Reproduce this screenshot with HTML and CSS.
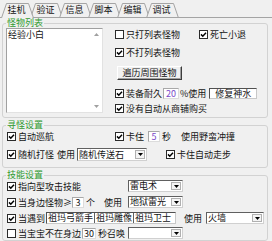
FILE: index.html
```html
<!DOCTYPE html>
<html lang="zh-CN">
<head>
<meta charset="utf-8">
<link rel="stylesheet" href="styles.css">
</head>
<body>
<div class="tabs">
  <svg class="tabshape" width="272" height="18" viewBox="0 0 272 18">
    <g fill="#f0f0f0" stroke="#a4a4a4" stroke-width="1">
      <path d="M30.5 18 L35.5 3.5 L57.5 3.5 L62.5 18"/>
      <path d="M59.5 18 L64.5 3.5 L86.5 3.5 L91.5 18"/>
      <path d="M88.5 18 L93.5 3.5 L115.5 3.5 L120.5 18"/>
      <path d="M117.5 18 L122.5 3.5 L144.5 3.5 L149.5 18"/>
      <path d="M146.5 18 L151.5 3.5 L173.5 3.5 L178.5 18"/>
    </g>
    <line x1="0" y1="17.5" x2="272" y2="17.5" stroke="#a4a4a4"/>
    <path d="M1 18.5 L6 3 L28 3 L33 18.5 Z" fill="#f0f0f0"/>
    <path d="M1.5 18 L6.5 3.5 L28.5 3.5 L33.5 18" fill="none" stroke="#a4a4a4"/>
  </svg>
  <div class="tablabels">
    <span class="tab">挂机</span><span class="tab">验证</span><span class="tab">信息</span><span class="tab">脚本</span><span class="tab">编辑</span><span class="tab">调试</span>
  </div>
</div>

<div class="panel">
  <fieldset class="grp g1">
    <legend>怪物列表</legend>
    <div class="g1body">
      <div class="listbox">
        <div class="items"><div class="item">经验小白</div></div>
        <div class="scroll">
          <svg width="5" height="3" viewBox="0 0 5 3"><path d="M0 3 L2.5 0 L5 3Z" fill="#a0a0a0"/></svg>
          <svg width="5" height="3" viewBox="0 0 5 3"><path d="M0 0 L2.5 3 L5 0Z" fill="#a0a0a0"/></svg>
        </div>
      </div>
      <div class="rcol">
        <div class="row r1">
          <label class="ck w84"><span class="cb"></span><span class="lbl">只打列表怪物</span></label>
          <label class="ck"><span class="cb on"><svg viewBox="0 0 7 7" width="7" height="7"><path d="M1 3.4 L2.8 5.2 L6 1.8" fill="none" stroke="#000" stroke-width="1.5"/></svg></span><span class="lbl">死亡小退</span></label>
        </div>
        <div class="row r2">
          <label class="ck"><span class="cb on"><svg viewBox="0 0 7 7" width="7" height="7"><path d="M1 3.4 L2.8 5.2 L6 1.8" fill="none" stroke="#000" stroke-width="1.5"/></svg></span><span class="lbl">不打列表怪物</span></label>
        </div>
        <div class="row r3"><button class="btn">遍历周围怪物</button></div>
        <div class="row r4">
          <label class="ck"><span class="cb on"><svg viewBox="0 0 7 7" width="7" height="7"><path d="M1 3.4 L2.8 5.2 L6 1.8" fill="none" stroke="#000" stroke-width="1.5"/></svg></span><span class="lbl">装备耐久</span></label>
          <span class="inp num purple w16">20</span>
          <span class="txt pct">%使用</span>
          <span class="inp sunk w48 center">修复神水</span>
        </div>
        <div class="row r5">
          <label class="ck"><span class="cb on"><svg viewBox="0 0 7 7" width="7" height="7"><path d="M1 3.4 L2.8 5.2 L6 1.8" fill="none" stroke="#000" stroke-width="1.5"/></svg></span><span class="lbl">没有自动从商铺购买</span></label>
        </div>
      </div>
    </div>
  </fieldset>

  <fieldset class="grp g2">
    <legend>寻怪设置</legend>
    <div class="gbody">
      <div class="row g2r1">
        <div class="lead108">
          <label class="ck"><span class="cb on"><svg viewBox="0 0 7 7" width="7" height="7"><path d="M1 3.4 L2.8 5.2 L6 1.8" fill="none" stroke="#000" stroke-width="1.5"/></svg></span><span class="lbl">自动巡航</span></label>
        </div>
        <label class="ck"><span class="cb on"><svg viewBox="0 0 7 7" width="7" height="7"><path d="M1 3.4 L2.8 5.2 L6 1.8" fill="none" stroke="#000" stroke-width="1.5"/></svg></span><span class="lbl">卡住</span></label>
        <span class="inp num purple w12">5</span>
        <span class="txt sec">秒</span>
        <span class="txt use1">使用野蛮冲撞</span>
      </div>
      <div class="row g2r2">
        <label class="ck"><span class="cb on"><svg viewBox="0 0 7 7" width="7" height="7"><path d="M1 3.4 L2.8 5.2 L6 1.8" fill="none" stroke="#000" stroke-width="1.5"/></svg></span><span class="lbl">随机打怪</span></label>
        <span class="txt use2">使用</span>
        <div class="dd dd70"><span class="ddt">随机传送石</span><span class="ddb"><svg width="5" height="3" viewBox="0 0 5 3"><path d="M0 0 L2.5 3 L5 0Z" fill="#000"/></svg></span></div>
        <label class="ck stuck"><span class="cb on"><svg viewBox="0 0 7 7" width="7" height="7"><path d="M1 3.4 L2.8 5.2 L6 1.8" fill="none" stroke="#000" stroke-width="1.5"/></svg></span><span class="lbl">卡住自动走步</span></label>
      </div>
    </div>
  </fieldset>

  <fieldset class="grp g3">
    <legend>技能设置</legend>
    <div class="gbody">
      <div class="row sr">
        <div class="lead121">
          <label class="ck"><span class="cb on"><svg viewBox="0 0 7 7" width="7" height="7"><path d="M1 3.4 L2.8 5.2 L6 1.8" fill="none" stroke="#000" stroke-width="1.5"/></svg></span><span class="lbl">指向型攻击技能</span></label>
        </div>
        <div class="dd dd55"><span class="ddt">雷电术</span><span class="ddb"><svg width="5" height="3" viewBox="0 0 5 3"><path d="M0 0 L2.5 3 L5 0Z" fill="#000"/></svg></span></div>
      </div>
      <div class="row sr">
        <div class="lead121">
          <label class="ck"><span class="cb on"><svg viewBox="0 0 7 7" width="7" height="7"><path d="M1 3.4 L2.8 5.2 L6 1.8" fill="none" stroke="#000" stroke-width="1.5"/></svg></span><span class="lbl">当身边怪物≥</span></label>
          <span class="inp num w12">3</span>
          <span class="txt ge">个</span>
          <span class="txt use3">使用</span>
        </div>
        <div class="dd dd55"><span class="ddt">地狱雷光</span><span class="ddb"><svg width="5" height="3" viewBox="0 0 5 3"><path d="M0 0 L2.5 3 L5 0Z" fill="#000"/></svg></span></div>
      </div>
      <div class="row sr">
        <label class="ck"><span class="cb on"><svg viewBox="0 0 7 7" width="7" height="7"><path d="M1 3.4 L2.8 5.2 L6 1.8" fill="none" stroke="#000" stroke-width="1.5"/></svg></span><span class="lbl">当遇到</span></label>
        <div class="multi">
          <span class="mi m1">祖玛弓箭手</span><span class="mi m2">祖玛雕像</span><span class="mi m3">祖玛卫士</span>
        </div>
        <span class="txt use4">使用</span>
        <div class="dd dd58"><span class="ddt">火墙</span><span class="ddb"><svg width="5" height="3" viewBox="0 0 5 3"><path d="M0 0 L2.5 3 L5 0Z" fill="#000"/></svg></span></div>
      </div>
      <div class="row sr last">
        <div class="lead121">
          <label class="ck"><span class="cb"></span><span class="lbl">当宝宝不在身边</span></label>
          <span class="inp num w14">30</span>
          <span class="txt sec2">秒召唤</span>
        </div>
        <div class="dd dd55"><span class="ddt"></span><span class="ddb"><svg width="5" height="3" viewBox="0 0 5 3"><path d="M0 0 L2.5 3 L5 0Z" fill="#000"/></svg></span></div>
      </div>
    </div>
  </fieldset>
</div>
</body>
</html>
```

FILE: styles.css
```css
* { box-sizing: border-box; }
html, body { margin: 0; padding: 0; }
body {
  width: 272px;
  height: 241px;
  overflow: hidden;
  background: #f0f0f0;
  font-family: "Noto Sans CJK SC", "Noto Sans", sans-serif;
  font-size: 9px;
  line-height: 1;
  color: #141414;
}

/* tabs */
.tabs { display: grid; height: 18px; }
.tabs > * { grid-area: 1 / 1; }
.tabshape { display: block; }
.tablabels { display: flex; padding-left: 2px; padding-top: 5px; }
.tab { width: 29px; text-align: center; line-height: 10px; }

/* panel and groups */
.panel { display: flex; flex-direction: column; padding: 0 4px 0 2px; gap: 2px; }
.grp {
  margin: 0;
  padding: 0;
  min-width: 0;
  border: 1px solid #d2d2d2;
  border-radius: 3px;
}
.grp legend {
  color: #2f9a2f;
  padding: 0 1px;
  margin-left: 3px;
  line-height: 10px;
  height: 10px;
}
.g1 { height: 100px; }
.g2 { height: 48px; }
.g3 { height: 71px; }

.row { display: flex; align-items: center; white-space: nowrap; }
.ck { display: flex; align-items: center; }
.cb {
  width: 9px;
  height: 9px;
  border: 1px solid #2a2a2a;
  background: #fff;
  display: flex;
  align-items: center;
  justify-content: center;
  flex: none;
}
.cb svg { display: block; }
.lbl { margin-left: 2px; }

/* group 1 */
.g1body { display: flex; padding-left: 3px; }
.listbox {
  width: 97px;
  height: 85px;
  background: #fff;
  border: 1px solid;
  border-color: #a0a0a0 #e2e2e2 #e2e2e2 #a0a0a0;
  display: flex;
}
.items { flex: 1; padding: 1px 0 0 1px; }
.item { line-height: 10px; }
.scroll {
  width: 12px;
  display: flex;
  flex-direction: column;
  justify-content: space-between;
  align-items: center;
  padding: 4px 0 4px;
}
.scroll svg { display: block; }
.rcol { margin-left: 12px; display: flex; flex-direction: column; }
.r1 { height: 12px; }
.w84 { width: 84px; }
.r2 { height: 12px; margin-top: 6px; }
.r3 { margin-top: 8px; }
.btn {
  width: 65px;
  height: 14px;
  margin: 0 0 0 2px;
  padding: 0;
  font: inherit;
  line-height: 12px;
  color: #141414;
  background: #f0f0f0;
  border: 1px solid;
  border-color: #ffffff #3c3c3c #3c3c3c #ffffff;
  box-shadow: inset -1px -1px 0 #a0a0a0;
}
.r4 { height: 12px; margin-top: 7px; }
.r5 { height: 12px; margin-top: 3px; }

.inp {
  height: 11px;
  background: #fff;
  border: 1px solid;
  border-color: #a8a8a8 #dcdcdc #dcdcdc #a8a8a8;
  line-height: 9px;
  display: flex;
  align-items: center;
  padding: 0 2px;
}
.inp.sunk { border-color: #505050 #c8c8c8 #c8c8c8 #505050; }
.center { justify-content: center; }
.num { justify-content: center; padding: 0; }
.purple { color: #7848c8; }
.w12 { width: 12px; }
.w14 { width: 14px; }
.w16 { width: 16px; }
.w48 { width: 48px; }
.r4 .w16 { margin-left: 1px; }
.pct { margin-left: 1px; margin-right: 3px; }

/* group 2 */
.gbody { padding-left: 4px; display: flex; flex-direction: column; }
.g2r1 { height: 12px; }
.lead108 { width: 108px; display: flex; align-items: center; }
.g2r1 .w12 { margin-left: 4px; }
.sec { margin-left: 2px; }
.use1 { margin-left: 10px; }
.g2r2 { height: 13px; margin-top: 6px; }
.use2 { margin-left: 3px; margin-right: 2px; }

.dd {
  display: flex;
  align-items: stretch;
  height: 13px;
  background: #fff;
  border: 1px solid;
  border-color: #606060 #d0d0d0 #d0d0d0 #606060;
}
.ddt { flex: 1; padding-left: 1px; line-height: 11px; }
.ddb {
  width: 10px;
  margin: 1px;
  background: #f4f4f4;
  border: 1px solid #b0b0b0;
  display: flex;
  align-items: center;
  justify-content: center;
}
.ddb svg { display: block; }
.dd70 { width: 70px; }
.dd55 { width: 55px; }
.dd58 { width: 58px; }
.stuck { margin-left: 19px; }

/* group 3 */
.sr { height: 12px; }
.sr + .sr { margin-top: 4px; }
.sr.last { margin-top: 3px; }
.sr .dd { height: 12px; }
.sr .ddt { line-height: 10px; }
.lead121 { width: 121px; display: flex; align-items: center; }
.ge { margin-left: 2px; }
.use3 { margin-left: auto; margin-right: 6px; }
.multi {
  display: flex;
  margin-left: 1px;
  height: 12px;
  background: #fff;
  border: 1px solid;
  border-color: #505050 #c8c8c8 #c8c8c8 #505050;
}
.mi { line-height: 10px; padding: 0 1px; border-right: 1px solid #606060; }
.mi.m3 { border-right: none; padding-right: 4px; }
.use4 { margin-left: 8px; margin-right: 4px; }
.sec2 { margin-left: 2px; }
.w14 { margin-left: 1px; }
```
